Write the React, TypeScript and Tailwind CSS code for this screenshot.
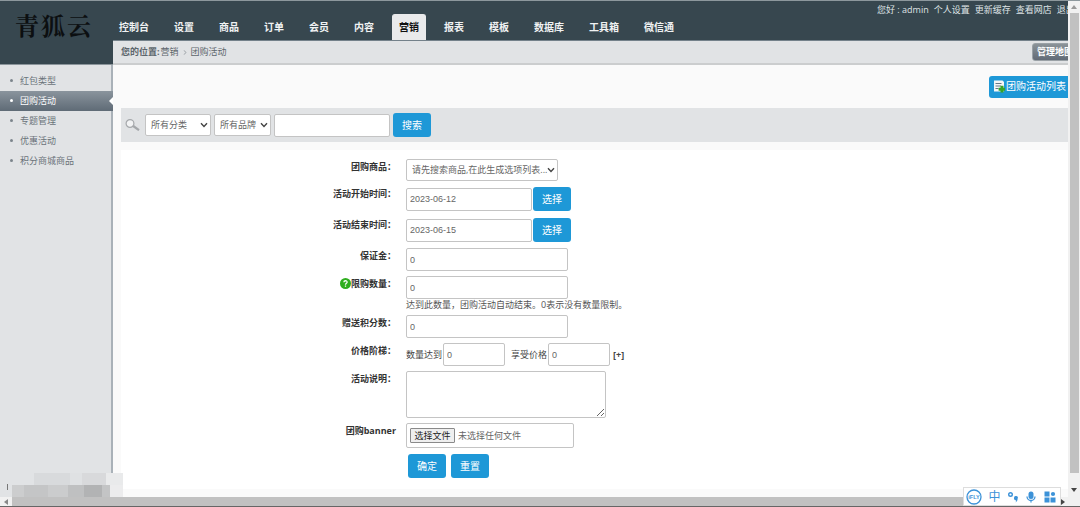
import type { ReactNode } from "react";

const navItems = ["控制台", "设置", "商品", "订单", "会员", "内容", "营销", "报表", "模板", "数据库", "工具箱", "微信通"];
const sideItems = ["红包类型", "团购活动", "专题管理", "优惠活动", "积分商城商品"];

const boxClass = "rounded-[2px] border border-[#c4c4c4] bg-white text-[9px] text-[#666] outline-none";
const inputClass = boxClass + " h-[23px] px-[3px] font-['Liberation_Sans','Noto_Sans_CJK_SC',sans-serif]";
const buttonClass = "flex h-6 w-[38px] shrink-0 items-center justify-center rounded-[3px] bg-[#1e98d7] text-[10px] text-white";

function Select({ label, option, width, id }: { label: string; option: string; width: string; id?: string }) {
  return (
    <span className={"grid shrink-0 items-center " + width}>
      <select id={id} aria-label={label} className={boxClass + " col-start-1 row-start-1 h-[22px] w-full appearance-none pr-2 pl-[5px]"}>
        <option>{option}</option>
      </select>
      <svg viewBox="0 0 8 6" className="pointer-events-none col-start-1 row-start-1 mr-[3px] h-[6px] w-2 justify-self-end">
        <path d="M1 1.200 4 4.400 7 1.200" fill="none" stroke="#444" strokeWidth="1.400" />
      </svg>
    </span>
  );
}

function Row({ label, htmlFor, help, children }: { label: string; htmlFor: string; help?: boolean; children: ReactNode }) {
  return (
    <div className="flex items-start gap-[10px]">
      <div className="flex w-[275px] shrink-0 items-start justify-end pt-[2px] leading-3">
        {help && (
          <svg viewBox="0 0 12 12" className="h-[11px] w-[11px] shrink-0">
            <circle cx="6" cy="6" r="6" fill="#2fae1f" />
            <path d="M4.200 4.600C4.300 2.400 7.900 2.500 7.800 4.600 7.700 5.800 6 5.800 6 7.300M6 8.200v1.400" fill="none" stroke="#fff" strokeWidth="1.400" />
          </svg>
        )}
        <label htmlFor={htmlFor} className="font-bold whitespace-nowrap text-[#333]">{label}</label>
      </div>
      <div className="min-w-0">{children}</div>
    </div>
  );
}

function DateField({ id, value }: { id: string; value: string }) {
  return (
    <div className="flex items-center gap-px py-px">
      <input id={id} type="text" defaultValue={value} className={inputClass + " w-[126px]"} />
      <button type="button" className={buttonClass}>选择</button>
    </div>
  );
}

function Sidebar() {
  return (
    <aside className="relative flex w-[113px] shrink-0 flex-col bg-[#e1e3e5]">
      <div className="flex h-16 gap-[2px] border-b border-[#8b959b] bg-[#37474f] pt-2 pl-[15px] font-['Noto_Serif_CJK_SC','Noto_Sans_CJK_SC',serif] text-2xl leading-8 font-bold text-[#0c0f11]">
        <span>青</span>
        <span>狐</span>
        <span>云</span>
      </div>
      <nav className="flex flex-1 flex-col border-r-2 border-[#a9b1b8] pt-[6px]">
        {sideItems.map((item, i) => {
          const active = i === 1;
          return (
            <a
              key={item}
              href="#"
              className={
                "flex h-5 items-center pb-px pl-[10px] " +
                (active ? "-mr-[2px] bg-linear-to-b from-[#8a949d] to-[#5f6b76] text-white" : "text-[#6b737a]")
              }
            >
              <span className={"mr-[7px] h-[3px] w-[3px] rounded-full " + (active ? "bg-white" : "bg-[#7c858c]")} />
              {item}
              {active && (
                <svg viewBox="0 0 4 8" className="ml-auto h-2 w-1">
                  <path d="M4 0 0 4l4 4z" fill="#fff" />
                </svg>
              )}
            </a>
          );
        })}
      </nav>
      <div className="absolute bottom-0 left-3 z-10 flex w-[111px] flex-col">
        <div className="ml-[22px] flex h-3">
          <span className="w-9 bg-[#d8dadc]" />
          <span className="w-3 bg-[#dfe1e3]" />
          <span className="w-6 bg-[#d8d9db]" />
          <span className="w-[17px] bg-[#e9eaeb]" />
        </div>
        <div className="flex h-3">
          <span className="w-3 bg-[#cccdce]" />
          <span className="w-6 bg-[#c4c5c6]" />
          <span className="w-5 bg-[#cbcccd]" />
          <span className="w-4 bg-[#bfc0c1]" />
          <span className="w-[18px] bg-[#b2b3b4]" />
          <span className="w-2 bg-[#c3c4c5]" />
          <span className="flex-1 bg-[#ececed]" />
        </div>
      </div>
      <span className="absolute bottom-[7px] left-[7px] h-[6px] w-px bg-[#777]" />
    </aside>
  );
}

function Header() {
  return (
    <header className="flex h-10 items-end overflow-hidden border-b border-[#74818a] bg-[#37474f]">
      <nav className="-mb-px -ml-px flex shrink-0 gap-[11px] text-[10px] font-bold">
        {navItems.map((item) => (
          <a
            key={item}
            href="#"
            className={
              "flex h-[27px] items-center rounded-t-[3px] border-x border-t px-[6px] pb-[2px] whitespace-nowrap " +
              (item === "营销" ? "border-[#e9eaeb] bg-[#e9eaeb] text-[#111]" : "border-transparent text-[#f0f2f3]")
            }
          >
            {item}
          </a>
        ))}
      </nav>
      <div className="ml-auto flex w-[191px] shrink-0 gap-[5px] self-start overflow-hidden pt-[3px] leading-3 whitespace-nowrap text-[#dfe3e5]">
        <span>您好 : admin</span>
        <a href="#">个人设置</a>
        <a href="#">更新缓存</a>
        <a href="#">查看网店</a>
        <a href="#">退出</a>
      </div>
    </header>
  );
}

function GroupForm() {
  return (
    <form className="flex flex-1 flex-col gap-[5px] bg-white pt-[9px] pb-[10px]" onSubmit={(e) => e.preventDefault()}>
      <Row label="团购商品：" htmlFor="goods">
        <Select id="goods" label="团购商品" option="请先搜索商品,在此生成选项列表..." width="w-[152px]" />
      </Row>
      <Row label="活动开始时间：" htmlFor="start">
        <DateField id="start" value="2023-06-12" />
      </Row>
      <Row label="活动结束时间：" htmlFor="end">
        <DateField id="end" value="2023-06-15" />
      </Row>
      <Row label="保证金：" htmlFor="deposit">
        <input id="deposit" type="text" defaultValue="0" className={inputClass + " block w-[162px]"} />
      </Row>
      <Row label="限购数量：" htmlFor="limit" help>
        <input id="limit" type="text" defaultValue="0" className={inputClass + " block w-[162px]"} />
        <p className="leading-[11px] text-[#555]">达到此数量，团购活动自动结束。0表示没有数量限制。</p>
      </Row>
      <Row label="赠送积分数：" htmlFor="points">
        <input id="points" type="text" defaultValue="0" className={inputClass + " block w-[162px]"} />
      </Row>
      <Row label="价格阶梯：" htmlFor="amount">
        <div className="flex items-center whitespace-nowrap text-[#444]">
          <label htmlFor="amount">数量达到</label>
          <input id="amount" type="text" defaultValue="0" className={inputClass + " mr-[6px] ml-px w-[62px]"} />
          <label htmlFor="price">享受价格</label>
          <input id="price" type="text" defaultValue="0" className={inputClass + " mr-[3px] ml-px w-[62px]"} />
          <a href="#" className="font-bold">[+]</a>
        </div>
      </Row>
      <Row label="活动说明：" htmlFor="desc">
        <textarea id="desc" className={boxClass + " block h-[47px] w-[200px] resize"} />
      </Row>
      <Row label="团购banner" htmlFor="banner">
        <label className={boxClass + " flex h-[25px] w-[168px] items-center gap-[3px] pl-[3px]"}>
          <input id="banner" type="file" className="sr-only" />
          <span className="flex h-[15px] w-[45px] items-center justify-center rounded-[1px] border border-[#8a8a8a] bg-[#efefef] text-[#222]">选择文件</span>
          <span>未选择任何文件</span>
        </label>
      </Row>
      <div className="flex gap-[5px] pt-px pl-[287px]">
        <button type="submit" className={buttonClass}>确定</button>
        <button type="reset" className={buttonClass}>重置</button>
      </div>
    </form>
  );
}

function InputMethodBar() {
  return (
    <div className="absolute right-[19px] bottom-0 z-20 flex h-[19px] w-[98px] items-center justify-between border border-[#ddd] bg-white pr-1 pl-[2px] text-[#3c92d8]">
      <svg viewBox="0 0 16 16" className="h-4 w-4">
        <circle cx="8" cy="8" r="7" fill="none" stroke="currentColor" strokeWidth="1.300" />
        <text x="8" y="10" textAnchor="middle" fontSize="5.500" fontWeight="700" fontFamily="Liberation Sans, sans-serif" fill="currentColor">iFLY</text>
      </svg>
      <span className="text-[12px] leading-4">中</span>
      <svg viewBox="0 0 12 12" className="h-3 w-3">
        <circle cx="3.500" cy="3.500" r="1.800" fill="none" stroke="currentColor" strokeWidth="1.400" />
        <path d="M7 7a1.900 1.900 0 1 1 3.600.8c0 1.800-.8 3-2.200 3.700.5-.8.8-1.500.7-2.300A1.900 1.900 0 0 1 7 7z" fill="currentColor" />
      </svg>
      <svg viewBox="0 0 12 12" className="h-3 w-3">
        <rect x="3.500" y="0.500" width="5" height="7.500" rx="2.500" fill="currentColor" />
        <path d="M2 5.500a4 4 0 0 0 8 0M6 9.500v2" fill="none" stroke="currentColor" strokeWidth="1.300" />
      </svg>
      <svg viewBox="0 0 12 12" className="h-3 w-3" fill="currentColor">
        <rect x="0.500" y="0.500" width="5" height="5" />
        <circle cx="9" cy="3" r="2.100" />
        <rect x="0.500" y="6.500" width="5" height="5" />
        <rect x="6.500" y="6.500" width="5" height="5" />
      </svg>
    </div>
  );
}

export default function App() {
  return (
    <div className="relative flex min-h-screen flex-col overflow-hidden border-t border-b border-t-[#8d989d] border-b-[#666] bg-[#fafafa] font-['Open_Sans','Noto_Sans_CJK_SC',sans-serif] text-[9px]">
      <div className="flex flex-1">
        <Sidebar />
        <div className="flex min-w-0 flex-1 flex-col">
          <Header />
          <div className="flex h-6 items-center overflow-hidden border-b-2 border-[#cbcdce] bg-[#e1e3e5] pl-2 whitespace-nowrap text-[#5d666c]">
            <span className="font-bold">您的位置:</span>
            <a href="#" className="ml-px">营销</a>
            <svg viewBox="0 0 4 6" className="mr-1 ml-1 h-[5px] w-1">
              <path d="M1 .5 3 3 1 5.500" fill="none" stroke="#8a9298" />
            </svg>
            <span>团购活动</span>
            <div className="ml-auto w-9 shrink-0 overflow-hidden">
              <button type="button" className="h-[18px] w-[46px] rounded-[3px] border border-[#9aa1a6] bg-linear-to-b from-[#8b9398] to-[#626b76] font-bold text-white">管理地图</button>
            </div>
          </div>
          <div className="flex h-[43px] items-center justify-end">
            <a href="#" className="flex h-[22px] items-center gap-px rounded-l-[3px] bg-[#1e98d7] pr-[2px] pl-[5px] text-[10px] text-white">
              <svg viewBox="0 0 11 13" className="h-[13px] w-[11px]">
                <path d="M0 .5h8.500L10 2v9.500H0z" fill="#f4f6f7" />
                <path d="M1.500 3.500h6M1.500 6h5.500M1.500 8.500h3" stroke="#667785" strokeWidth="1.200" />
                <path d="M8 5.800v6.700M4.600 9.200h6.400" stroke="#35a42a" strokeWidth="3" />
              </svg>
              团购活动列表
            </a>
          </div>
          <div className="ml-2 flex h-[34px] items-center bg-[#e1e3e5] pl-1">
            <svg viewBox="0 0 15 12" className="mr-[5px] h-3 w-[15px] shrink-0">
              <circle cx="5" cy="4.500" r="3.900" fill="#f2f3f4" stroke="#a5a8ab" strokeWidth="1.200" />
              <path d="m8.200 7 5.800 4.200" stroke="#a5a8ab" strokeWidth="2.200" />
            </svg>
            <div className="flex items-center gap-[3px]">
              <Select label="分类" option="所有分类" width="w-[66px]" />
              <Select label="品牌" option="所有品牌" width="w-[57px]" />
              <input type="text" aria-label="关键字" className={inputClass + " w-[116px]"} />
              <button type="button" className={buttonClass}>搜索</button>
            </div>
          </div>
          <div className="flex flex-1 flex-col pt-2 pb-2 pl-2">
            <GroupForm />
          </div>
        </div>
        <div className="flex w-3 shrink-0 flex-col items-center bg-[#f1f1f1]">
          <svg viewBox="0 0 6 4" className="my-1 h-1 w-[6px]"><path d="M0 4 3 0l3 4z" fill="#999" /></svg>
          <div className="w-[9px] flex-1 bg-[#c1c1c1]" />
          <svg viewBox="0 0 6 4" className="mt-[15px] mb-[5px] h-1 w-[6px]"><path d="M0 0 3 4l3-4z" fill="#444" /></svg>
        </div>
      </div>
      <div className="flex h-[9px] items-center bg-[#f1f1f1] pr-3">
        <svg viewBox="0 0 4 6" className="mx-1 h-[6px] w-1"><path d="M4 0 0 3l4 3z" fill="#888" /></svg>
        <div className="h-full flex-1 bg-[#c1c1c1]" />
        <svg viewBox="0 0 4 6" className="mx-[3px] h-[6px] w-1"><path d="M0 0 4 3 0 6z" fill="#444" /></svg>
      </div>
      <InputMethodBar />
    </div>
  );
}
